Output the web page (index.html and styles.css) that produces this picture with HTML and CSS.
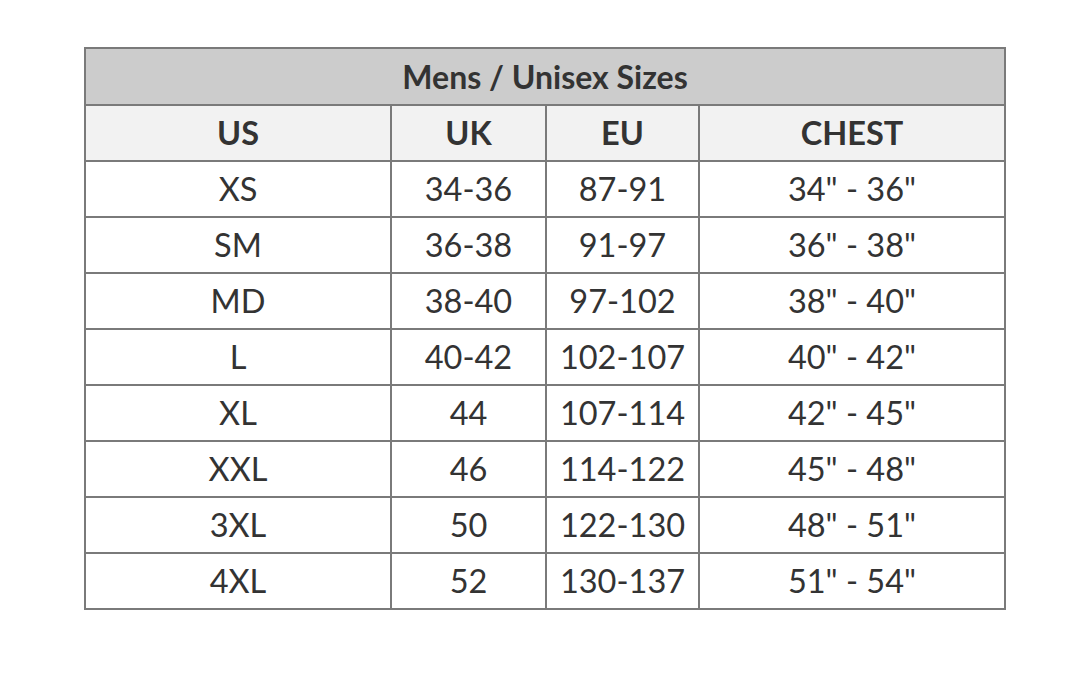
FILE: index.html
```html
<!DOCTYPE html>
<html>
<head>
<meta charset="utf-8">
<link rel="stylesheet" href="styles.css">
</head>
<body>
<div class="page">
<table class="sizes">
  <colgroup>
    <col class="c-us"><col class="c-uk"><col class="c-eu"><col class="c-chest">
  </colgroup>
  <tr class="title-row"><th colspan="4">Mens / Unisex Sizes</th></tr>
  <tr class="head-row"><th>US</th><th>UK</th><th>EU</th><th>CHEST</th></tr>
  <tr><td>XS</td><td>34-36</td><td>87-91</td><td>34" - 36"</td></tr>
  <tr><td>SM</td><td>36-38</td><td>91-97</td><td>36" - 38"</td></tr>
  <tr><td>MD</td><td>38-40</td><td>97-102</td><td>38" - 40"</td></tr>
  <tr><td>L</td><td>40-42</td><td>102-107</td><td>40" - 42"</td></tr>
  <tr><td>XL</td><td>44</td><td>107-114</td><td>42" - 45"</td></tr>
  <tr><td>XXL</td><td>46</td><td>114-122</td><td>45" - 48"</td></tr>
  <tr><td>3XL</td><td>50</td><td>122-130</td><td>48" - 51"</td></tr>
  <tr><td>4XL</td><td>52</td><td>130-137</td><td>51" - 54"</td></tr>
</table>
</div>
</body>
</html>
```
FILE: styles.css
```css
html, body {
  margin: 0;
  padding: 0;
  background: #ffffff;
}
.page {
  padding: 47px 0 0 84px;
}
.sizes {
  border-collapse: collapse;
  width: 920px;
  table-layout: fixed;
  font-family: Lato, "Open Sans", sans-serif;
  color: #333333;
}
.c-us { width: 306px; }
.c-uk { width: 155px; }
.c-eu { width: 153px; }
.c-chest { width: 306px; }
.sizes th, .sizes td {
  border: 2px solid #7a7a7a;
  text-align: center;
  vertical-align: middle;
  padding: 0;
  height: 54px;
  line-height: 1;
  font-size: 32.5px;
}
.sizes td {
  font-weight: 400;
}
.title-row th {
  background: #cccccc;
  font-size: 32px;
  font-weight: 700;
  height: 55px;
}
.head-row th {
  background: #f2f2f2;
  font-weight: 700;
}
```
